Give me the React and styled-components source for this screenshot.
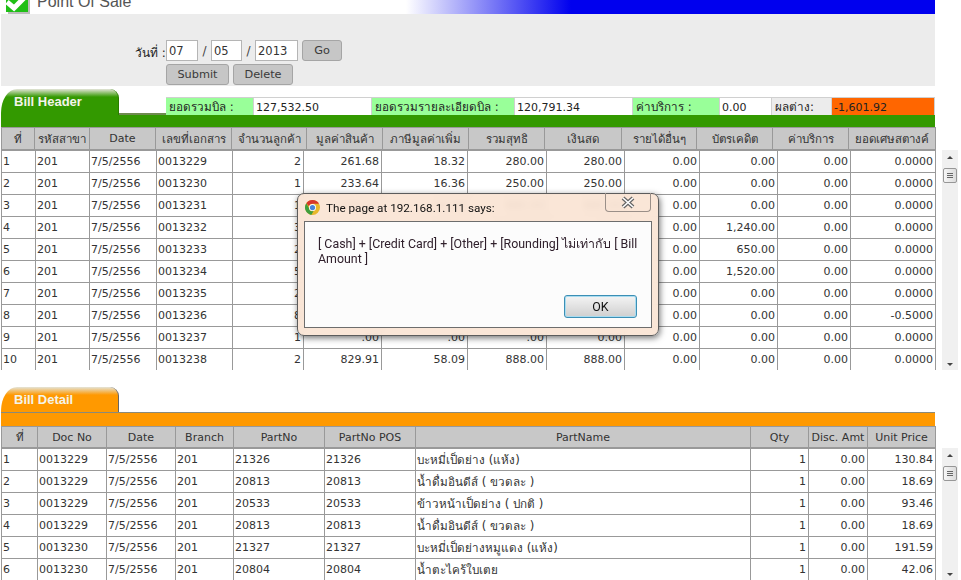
import React from 'react';
import styled, { createGlobalStyle } from 'styled-components';

const GlobalStyle = createGlobalStyle`
  html, body {
    margin: 0;
    height: 580px;
    overflow: hidden;
    background: #fff;
  }
  body {
    font-family: "DejaVu Sans", "Noto Sans", sans-serif;
    font-size: 11px;
    color: #333;
  }
`;

const headerCols = [34, 55, 66, 76, 75, 76, 86, 76, 77, 75, 76, 76, 87];
const headerBodyCols = [35, 54, 67, 76, 71, 78, 86, 79, 78, 75, 78, 73, 85];
const detailCols = [37, 69, 69, 58, 91, 91, 335, 58, 59, 68];

const headerTitles = ['ที่', 'รหัสสาขา', 'Date', 'เลขที่เอกสาร', 'จำนวนลูกค้า', 'มูลค่าสินค้า', 'ภาษีมูลค่าเพิ่ม', 'รวมสุทธิ', 'เงินสด', 'รายได้อื่นๆ', 'บัตรเคดิต', 'ค่าบริการ', 'ยอดเศษสตางค์'];
const detailTitles = ['ที่', 'Doc No', 'Date', 'Branch', 'PartNo', 'PartNo POS', 'PartName', 'Qty', 'Disc. Amt', 'Unit Price'];

const bills = [
  ['1', '201', '7/5/2556', '0013229', '2', '261.68', '18.32', '280.00', '280.00', '0.00', '0.00', '0.00', '0.0000'],
  ['2', '201', '7/5/2556', '0013230', '1', '233.64', '16.36', '250.00', '250.00', '0.00', '0.00', '0.00', '0.0000'],
  ['3', '201', '7/5/2556', '0013231', '1', '635.51', '44.49', '680.00', '680.00', '0.00', '0.00', '0.00', '0.0000'],
  ['4', '201', '7/5/2556', '0013232', '3', '1,158.88', '81.12', '1,240.00', '0.00', '0.00', '1,240.00', '0.00', '0.0000'],
  ['5', '201', '7/5/2556', '0013233', '2', '607.48', '42.52', '650.00', '0.00', '0.00', '650.00', '0.00', '0.0000'],
  ['6', '201', '7/5/2556', '0013234', '5', '1,420.56', '99.44', '1,520.00', '0.00', '0.00', '1,520.00', '0.00', '0.0000'],
  ['7', '201', '7/5/2556', '0013235', '2', '411.21', '28.79', '440.00', '440.00', '0.00', '0.00', '0.00', '0.0000'],
  ['8', '201', '7/5/2556', '0013236', '8', '1,121.50', '78.50', '1,200.00', '1,200.00', '0.00', '0.00', '0.00', '-0.5000'],
  ['9', '201', '7/5/2556', '0013237', '1', '.00', '.00', '.00', '0.00', '0.00', '0.00', '0.00', '0.0000'],
  ['10', '201', '7/5/2556', '0013238', '2', '829.91', '58.09', '888.00', '888.00', '0.00', '0.00', '0.00', '0.0000'],
];

const details = [
  ['1', '0013229', '7/5/2556', '201', '21326', '21326', 'บะหมี่เป็ดย่าง (แห้ง)', '1', '0.00', '130.84'],
  ['2', '0013229', '7/5/2556', '201', '20813', '20813', 'น้ำดื่มอินดีส์ ( ขวดละ )', '1', '0.00', '18.69'],
  ['3', '0013229', '7/5/2556', '201', '20533', '20533', 'ข้าวหน้าเป็ดย่าง ( ปกติ )', '1', '0.00', '93.46'],
  ['4', '0013229', '7/5/2556', '201', '20813', '20813', 'น้ำดื่มอินดีส์ ( ขวดละ )', '1', '0.00', '18.69'],
  ['5', '0013230', '7/5/2556', '201', '21327', '21327', 'บะหมี่เป็ดย่างหมูแดง (แห้ง)', '1', '0.00', '191.59'],
  ['6', '0013230', '7/5/2556', '201', '20804', '20804', 'น้ำตะไคร้ใบเตย', '1', '0.00', '42.06'],
];

const isLatin = text => /^[\x00-\x7f]+$/.test(text);

const Page = styled.div`
  position: relative;
  width: 961px;
  height: 580px;
  overflow: hidden;
`;

const TopBar = styled.header`
  display: flex;
  align-items: flex-end;
  gap: 5px;
  width: 929px;
  height: 14px;
  margin-left: 1px;
  padding-left: 5px;
  overflow: hidden;
  background: linear-gradient(90deg, #fff 0, #fff 405px, #0000ee 570px, #0000ee 100%);
`;

const PageIcon = styled.svg`
  flex: none;
  width: 26px;
  height: 26px;
  margin-bottom: -1px;
`;

const PageTitle = styled.span`
  font-family: "Liberation Sans", Arial, sans-serif;
  font-size: 16px;
  line-height: 18px;
  margin-bottom: 3px;
  color: #555;
`;

const DatePanel = styled.div`
  display: flex;
  gap: 1px;
  width: 800px;
  height: 46px;
  margin-left: 1px;
  padding: 26px 0 0 134px;
  background: #ececec;
`;

const DateLabel = styled.span`
  width: 30px;
  margin-top: 3px;
  font-size: 12px;
  color: #222;
  white-space: nowrap;
`;

const DateForm = styled.div`
  display: flex;
  flex-direction: column;
  gap: 3px;
`;

const FormRow = styled.div`
  display: flex;
  align-items: center;
  gap: ${p => p.$gap || 0}px;
`;

const DateInput = styled.div`
  box-sizing: border-box;
  width: ${p => p.$w}px;
  height: 21px;
  padding-left: 2px;
  border: 1px solid #b5b5b5;
  background: #fff;
  font-size: 11.5px;
  line-height: 20px;
  color: #333;
`;

const Slash = styled.span`
  width: ${p => p.$w}px;
  text-align: center;
  font-size: 12px;
  color: #444;
`;

const GrayButton = styled.button`
  box-sizing: border-box;
  width: ${p => p.$w}px;
  height: 21px;
  margin-left: ${p => p.$ml || 0}px;
  padding: 0;
  border: 1px solid #a5a5a5;
  border-radius: 3px;
  background: #c6c6c6;
  font-family: inherit;
  font-size: 11.3px;
  color: #3a3a3a;
`;

const TabRow = styled.div`
  display: flex;
  height: ${p => p.$h}px;
  margin-left: 1px;
  align-items: flex-end;
`;

const Tab = styled.div`
  box-sizing: border-box;
  flex: none;
  width: 118px;
  height: ${p => p.$h}px;
  padding: ${p => p.$pt}px 0 0 13px;
  border-radius: 16px 9px 0 0 / 24px 9px 0 0;
  background: linear-gradient(180deg, #e4e4d8 0, ${p => p.$color} 8px);
  border-right: 1px solid ${p => p.$edge};
  font-family: "Liberation Sans", Arial, sans-serif;
  font-size: 13px;
  font-weight: bold;
  line-height: 17px;
  color: #f4f4ea;
`;

const TabNotch = styled.div`
  flex: none;
  width: 47px;
  height: 2px;
  background: #6f8a50;
`;

const SummaryBar = styled.div`
  display: flex;
  height: 18px;
`;

const SummaryCell = styled.div`
  box-sizing: border-box;
  width: ${p => p.$w}px;
  height: 18px;
  padding-left: ${p => (p.$value ? 2 : 3)}px;
  border: 1px solid #d0d0d0;
  border-width: 1px 1px 0 0;
  background: ${p => p.$bg};
  font-size: ${p => (p.$value ? 11 : 11.7)}px;
  line-height: 19px;
  color: #222;
  white-space: nowrap;
  overflow: hidden;
`;

const ColorBar = styled.div`
  width: 934px;
  height: ${p => p.$h}px;
  margin-left: 1px;
  background: ${p => p.$color};
  border-top: ${p => (p.$line ? '1px solid #8a8a7a' : 'none')};
`;

const Grid = styled.table`
  width: 935px;
  margin-left: 1px;
  border-collapse: separate;
  border-spacing: 0;
  table-layout: fixed;
`;

const Col = styled.col`
  width: ${p => p.$w}px;
`;

const HeadCell = styled.th`
  box-sizing: border-box;
  height: ${p => p.$h}px;
  padding: 0;
  border: 1px solid #999;
  border-left: 0;
  border-bottom-width: 2px;
  background: #c8c8c8;
  font-weight: normal;
  font-size: ${p => (p.$latin ? 11 : 11.5)}px;
  color: #333;
  white-space: nowrap;
  overflow: hidden;
  &:first-child {
    border-left: 1px solid #999;
  }
`;

const BodyCell = styled.td`
  box-sizing: border-box;
  height: 22px;
  padding: 0 2px 0 1px;
  border-right: 1px solid #999;
  border-bottom: 1px solid #999;
  text-align: ${p => (p.$right ? 'right' : 'left')};
  font-size: ${p => (p.$latin ? 11 : 11.7)}px;
  color: #333;
  white-space: nowrap;
  overflow: hidden;
  &:first-child {
    border-left: 1px solid #999;
  }
`;

const BodyArea = styled.div`
  display: flex;
  height: ${p => p.$h}px;
  gap: 6px;
`;

const BodyClip = styled.div`
  flex: none;
  width: 936px;
  height: 100%;
  overflow: hidden;
`;

const ScrollTrack = styled.div`
  display: flex;
  flex-direction: column;
  align-items: center;
  flex: none;
  width: 16px;
  height: calc(100% + 1px);
  margin-top: -1px;
  background: #f0f0f0;
`;

const ScrollArrow = styled.div`
  width: 0;
  height: 0;
  margin-top: ${p => (p.$down ? 'auto' : '6px')};
  margin-bottom: ${p => (p.$down ? '4px' : 0)};
  border-left: 3px solid transparent;
  border-right: 3px solid transparent;
  border-bottom: ${p => (p.$down ? 0 : '3px solid #444')};
  border-top: ${p => (p.$down ? '3px solid #444' : 0)};
`;

const ScrollThumb = styled.div`
  box-sizing: border-box;
  display: flex;
  flex-direction: column;
  align-items: center;
  justify-content: center;
  gap: 1px;
  width: 14px;
  height: 15px;
  margin-top: 9px;
  border: 1px solid #979797;
  border-radius: 2px;
  background: linear-gradient(90deg, #f6f6f6, #dcdcdc);
`;

const ThumbLine = styled.i`
  display: block;
  width: 6px;
  height: 1px;
  background: #666;
`;

const Dialog = styled.div`
  position: absolute;
  left: 297px;
  top: 193px;
  box-sizing: border-box;
  width: 362px;
  height: 143px;
  padding: 0 6px 7px;
  display: flex;
  flex-direction: column;
  border: 1px solid #5c5c5c;
  border-radius: 7px;
  background: rgba(250, 228, 212, 0.93);
  backdrop-filter: blur(3px);
  box-shadow: 1px 2px 6px rgba(0, 0, 0, 0.55);
  font-family: Roboto, "Noto Sans", sans-serif;
  font-size: 12px;
  color: #111;
`;

const DialogTitle = styled.div`
  display: flex;
  align-items: center;
  gap: 6px;
  height: 27px;
  flex: none;
  padding-left: 1px;
  font-size: 11.7px;
`;

const CloseButton = styled.div`
  position: absolute;
  top: -1px;
  right: 7px;
  display: flex;
  align-items: center;
  justify-content: center;
  box-sizing: border-box;
  width: 46px;
  height: 19px;
  border: 1px solid #9a8f88;
  border-top: 0;
  border-radius: 0 0 4px 4px;
`;

const DialogBody = styled.div`
  flex: 1;
  display: flex;
  flex-direction: column;
  justify-content: space-between;
  padding: 14px 8px 9px 13px;
  border: 1px solid #6d6d6d;
  background: #fcfcfc;
  font-size: 12.4px;
  line-height: 15px;
  color: #30202c;
`;

const OkButton = styled.button`
  align-self: flex-end;
  box-sizing: border-box;
  width: 73px;
  height: 23px;
  margin-right: 6px;
  padding: 0;
  border: 1px solid #3c8fb5;
  border-radius: 3px;
  background: linear-gradient(180deg, #f4f4f4, #cfcfcf);
  box-shadow: inset 0 0 0 1px #a9dcf0;
  font-family: inherit;
  font-size: 12.4px;
  color: #111;
`;

const Scrollbar = () => (
  <ScrollTrack>
    <ScrollArrow />
    <ScrollThumb>
      <ThumbLine />
      <ThumbLine />
      <ThumbLine />
    </ScrollThumb>
    <ScrollArrow $down />
  </ScrollTrack>
);

const HeadTable = ({ cols, titles, height }) => (
  <Grid>
    <colgroup>{cols.map((w, i) => <Col key={i} $w={w} />)}</colgroup>
    <thead>
      <tr>{titles.map(t => <HeadCell key={t} $h={height} $latin={isLatin(t)}>{t}</HeadCell>)}</tr>
    </thead>
  </Grid>
);

const BodyTable = ({ cols, rows, isRight }) => (
  <Grid>
    <colgroup>{cols.map((w, i) => <Col key={i} $w={w} />)}</colgroup>
    <tbody>
      {rows.map(row => (
        <tr key={row[0]}>
          {row.map((v, i) => <BodyCell key={i} $right={isRight(i)} $latin={isLatin(v)}>{v}</BodyCell>)}
        </tr>
      ))}
    </tbody>
  </Grid>
);

const ChromeLogo = () => (
  <svg width="15" height="15" viewBox="0 0 24 24">
    <circle cx="12" cy="12" r="12" fill="#e8b82c" />
    <path d="M12 0a12 12 0 0 1 10.4 6H12a6 6 0 0 0-5.6 3.8L2.2 5A12 12 0 0 1 12 0z" fill="#d8372c" />
    <path d="M2.2 5l4.4 8.6A6 6 0 0 0 13.6 18l-3.6 5.8A12 12 0 0 1 2.2 5z" fill="#3f9e3f" />
    <circle cx="12" cy="12" r="5.6" fill="#fff" />
    <circle cx="12" cy="12" r="4.2" fill="#4a85d8" />
  </svg>
);

export default function App() {
  return (
    <Page>
      <GlobalStyle />
      <TopBar>
        <PageIcon viewBox="0 0 26 26">
          <rect x="2" y="2" width="22" height="23" fill="#bbb" />
          <rect x="0" y="0" width="22" height="23" fill="#1fbf16" />
          <path d="M1 13l7 6L20 7" fill="none" stroke="#fff" strokeWidth="5" />
        </PageIcon>
        <PageTitle>Point Of Sale</PageTitle>
      </TopBar>

      <DatePanel>
        <DateLabel>วันที่ :</DateLabel>
        <DateForm>
          <FormRow>
            <DateInput $w={32}>07</DateInput>
            <Slash $w={13}>/</Slash>
            <DateInput $w={31}>05</DateInput>
            <Slash $w={13}>/</Slash>
            <DateInput $w={43}>2013</DateInput>
            <GrayButton $w={40} $ml={4}>Go</GrayButton>
          </FormRow>
          <FormRow $gap={4}>
            <GrayButton $w={63}>Submit</GrayButton>
            <GrayButton $w={60}>Delete</GrayButton>
          </FormRow>
        </DateForm>
      </DatePanel>

      <TabRow $h={29}>
        <Tab $color="#339900" $edge="#2a7d00" $h={26} $pt={4}>Bill Header</Tab>
        <TabNotch />
        <SummaryBar>
          <SummaryCell $w={88} $bg="#99ff99">ยอดรวมบิล :</SummaryCell>
          <SummaryCell $w={118} $bg="#fff" $value>127,532.50</SummaryCell>
          <SummaryCell $w={143} $bg="#99ff99">ยอดรวมรายละเอียดบิล :</SummaryCell>
          <SummaryCell $w={118} $bg="#fff" $value>120,791.34</SummaryCell>
          <SummaryCell $w={87} $bg="#99ff99">ค่าบริการ :</SummaryCell>
          <SummaryCell $w={52} $bg="#fff" $value>0.00</SummaryCell>
          <SummaryCell $w={60} $bg="#ececec">ผลต่าง:</SummaryCell>
          <SummaryCell $w={103} $bg="#ff6600" $value>-1,601.92</SummaryCell>
        </SummaryBar>
      </TabRow>
      <ColorBar $h={12} $color="#339900" />
      <HeadTable cols={headerCols} titles={headerTitles} height={24} />
      <BodyArea $h={219}>
        <BodyClip>
          <BodyTable cols={headerBodyCols} rows={bills} isRight={i => i > 3} />
        </BodyClip>
        <Scrollbar />
      </BodyArea>

      <TabRow $h={42}>
        <Tab $color="#ff9900" $edge="#666" $h={25} $pt={4}>Bill Detail</Tab>
      </TabRow>
      <ColorBar $h={13} $color="#ff9900" $line />
      <HeadTable cols={detailCols} titles={detailTitles} height={23} />
      <BodyArea $h={131}>
        <BodyClip>
          <BodyTable cols={detailCols} rows={details} isRight={i => i > 6} />
        </BodyClip>
        <Scrollbar />
      </BodyArea>

      <Dialog>
        <DialogTitle>
          <ChromeLogo />
          The page at 192.168.1.111 says:
        </DialogTitle>
        <CloseButton>
          <svg width="16" height="13" viewBox="0 0 16 13">
            <path d="M3 2l10 9M13 2L3 11" stroke="#666" strokeWidth="4" />
            <path d="M3 2l10 9M13 2L3 11" stroke="#fff" strokeWidth="1.6" />
          </svg>
        </CloseButton>
        <DialogBody>
          <div>[ Cash] + [Credit Card] + [Other] + [Rounding] ไม่เท่ากับ [ Bill Amount ]</div>
          <OkButton>OK</OkButton>
        </DialogBody>
      </Dialog>
    </Page>
  );
}
